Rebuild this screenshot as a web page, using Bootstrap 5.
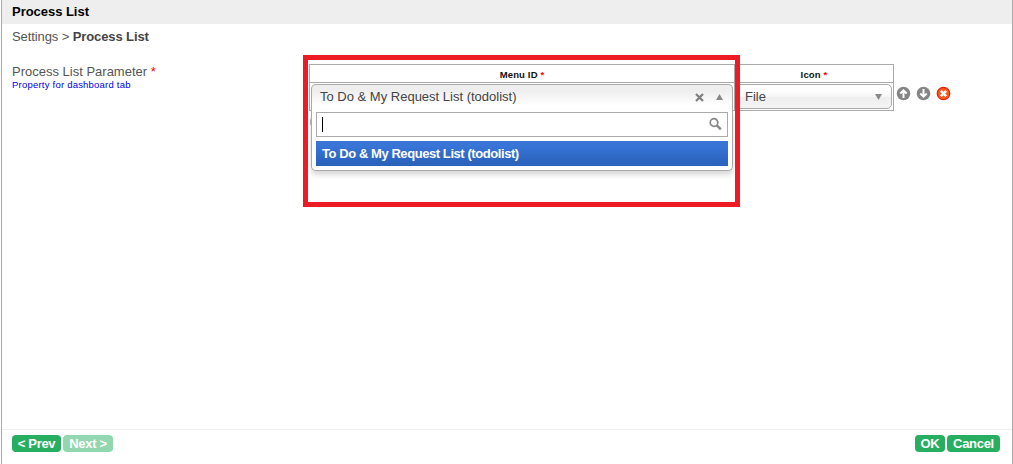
<!DOCTYPE html>
<html lang="en">
<head>
<meta charset="utf-8">
<title>Process List</title>
<link href="https://cdn.jsdelivr.net/npm/bootstrap@5.3.0/dist/css/bootstrap.min.css" rel="stylesheet">
<style>
body{font:13px/16px "Liberation Sans",Arial,sans-serif;color:#555;background:#fff}
.panel{height:464px;margin-left:1px;border-left:1px solid #aaa;border-right:1px solid #aaa}
.panel-title{height:24px;background:#eee;color:#000;padding:4px 10px 0;font-size:13px;line-height:16px;letter-spacing:-.03px}
.crumb{padding:5px 10px 0;height:40px;letter-spacing:-.1px}
.crumb b{color:#444}
.field-label{width:297px;padding-left:10px;flex:none}
.hint{color:#00e;font-size:9.5px;line-height:10px;letter-spacing:.22px}
.req{color:red}
.param-grid{width:585px;height:47px;border:1px solid #aaa;display:grid;grid-template-columns:425px 158px;grid-template-rows:18px 27px;flex:none;position:relative}
.grid-head{border-bottom:1px solid #aaa;color:#111;font-size:9.5px;font-weight:700;line-height:20px;text-align:center;letter-spacing:.15px;overflow:hidden}
.split{border-right:1px solid #aaa}
.picker{border:1px solid #aaa;border-radius:5px;height:25px;margin:1px;padding:0 9px 0 8px;line-height:24px;color:#444;background:linear-gradient(#fff 20%,#f6f6f6 50%,#eee 52%,#f4f4f4 100%)}
.picker.open{border-bottom:0;border-radius:5px 5px 0 0;background:linear-gradient(#eee 20%,#fff 80%);height:27px;padding-bottom:2px}
.drop{position:absolute;z-index:2;left:1px;top:19px;width:422px}
.drop-body{height:60px;border:1px solid #aaa;border-top:0;border-radius:0 0 5px 5px;background:#fff;box-shadow:0 4px 5px rgba(0,0,0,.15);padding:1px 4px 0}
.search-row{height:25px;border:1px solid #aaa;padding:4px 5px 0}
.caret{width:1px;height:15px;background:#000}
.choice{height:25px;margin-top:4px;padding-left:6px;line-height:25px;color:#fff;font-weight:700;background:linear-gradient(#3875d7 20%,#2a62bc 90%);letter-spacing:-.43px}
.marker{position:absolute;z-index:3;left:-7px;top:-10px;width:437px;height:152px;border:5px solid #ed1c24}
.marker-peek{position:absolute;left:0;top:53px;width:3px;height:8px;background:#bbb;border-radius:3px 0 0 3px}
.row-tools{gap:5px;padding:22px 0 0 2px}
.foot{height:35px;border-top:1px solid #eee;padding:5px 12px 0 10px;gap:2px}
.act{height:17px;border:0;border-radius:4px;background:#27ae60;color:#fff;font-size:13px;font-weight:700;line-height:17px;padding:0;text-align:center;letter-spacing:-.3px}
.act:disabled{background:#93d7b0;color:#fff;opacity:1}
svg{display:block}
</style>
</head>
<body>
<main class="panel d-flex flex-column">
  <header class="panel-title fw-bold">Process List</header>
  <nav class="crumb">Settings &gt; <b>Process List</b></nav>
  <section class="d-flex flex-grow-1 align-items-start">
    <div class="field-label">
      <div>Process List Parameter <span class="req">*</span></div>
      <div class="hint">Property for dashboard tab</div>
    </div>
    <div class="d-flex" style="margin-left:10px">
      <div class="param-grid">
        <div class="grid-head split">Menu ID <span class="req">*</span></div>
        <div class="grid-head">Icon <span class="req">*</span></div>
        <div class="split"></div>
        <div><div class="picker d-flex justify-content-between align-items-center"><span>File</span>
          <svg width="7" height="6" viewBox="0 0 7 6"><path d="M0 0h7L3.5 6z" fill="#888"/></svg></div></div>
        <div class="marker-peek"></div>
        <div class="drop">
          <div class="picker open m-0 d-flex align-items-center"><span class="me-auto">To Do &amp; My Request List (todolist)</span>
            <svg width="9" height="9" viewBox="0 0 9 9"><path d="M1 1l7 7M8 1L1 8" stroke="#808080" stroke-width="2.3"/></svg>
            <svg style="margin-left:12px" width="7" height="6" viewBox="0 0 7 6"><path d="M0 6h7L3.5 0z" fill="#888"/></svg>
          </div>
          <div class="drop-body">
            <div class="search-row d-flex justify-content-between"><span class="caret"></span>
              <svg width="13" height="14" viewBox="0 0 13 14"><circle cx="5" cy="5.5" r="3.8" fill="none" stroke="#888" stroke-width="1.7"/><path d="M7.8 8.3l4 4" stroke="#888" stroke-width="2.5"/></svg>
            </div>
            <div class="choice">To Do &amp; My Request List (todolist)</div>
          </div>
        </div>
        <div class="marker"></div>
      </div>
      <div class="row-tools d-flex">
        <svg width="15" height="15" viewBox="0 0 15 15"><circle cx="7.5" cy="7.5" r="6.8" fill="#858585"/><path d="M7.5 12V4.5M4.3 7.5l3.2-3.2 3.2 3.2" fill="none" stroke="#fff" stroke-width="2"/></svg>
        <svg width="15" height="15" viewBox="0 0 15 15"><circle cx="7.5" cy="7.5" r="6.8" fill="#858585"/><path d="M7.5 3v7.5M4.3 7.5l3.2 3.2 3.2-3.2" fill="none" stroke="#fff" stroke-width="2"/></svg>
        <svg width="15" height="15" viewBox="0 0 15 15"><circle cx="7.5" cy="7.5" r="6.2" fill="#ff5a1c" stroke="#e52207" stroke-width="1.3"/><path d="M4.8 4.8l5.4 5.4M10.2 4.8l-5.4 5.4" stroke="#fff" stroke-width="2.4"/></svg>
      </div>
    </div>
  </section>
  <footer class="foot d-flex">
    <button class="act" style="width:49px">&lt; Prev</button>
    <button class="act me-auto" style="width:50px" disabled>Next &gt;</button>
    <button class="act" style="width:30px">OK</button>
    <button class="act" style="width:53px">Cancel</button>
  </footer>
</main>
<script src="https://cdn.jsdelivr.net/npm/bootstrap@5.3.0/dist/js/bootstrap.bundle.min.js"></script>
</body>
</html>
